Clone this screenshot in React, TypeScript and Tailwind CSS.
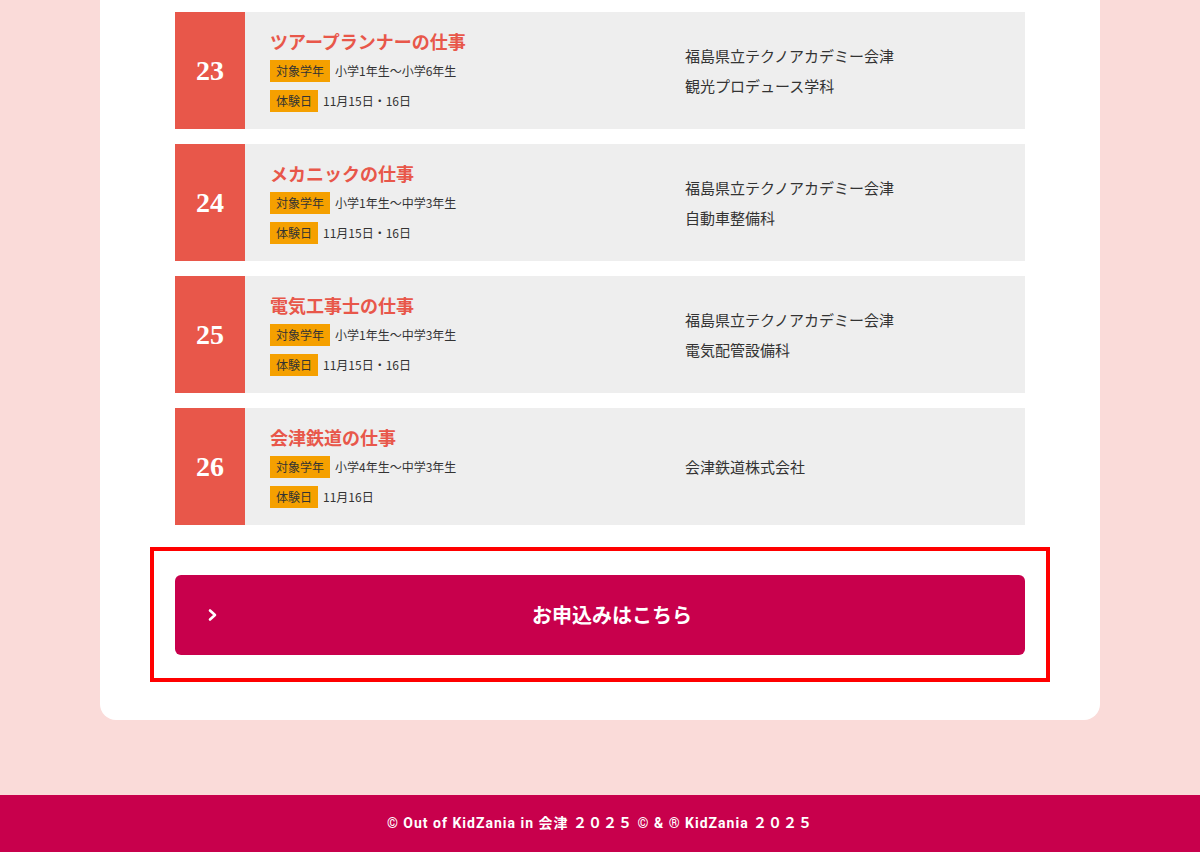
import React from "react";

interface Job {
  no: number;
  title: string;
  grade: string;
  date: string;
  school: string[];
}

const jobs: Job[] = [
  {
    no: 23,
    title: "ツアープランナーの仕事",
    grade: "小学1年生〜小学6年生",
    date: "11月15日・16日",
    school: ["福島県立テクノアカデミー会津", "観光プロデュース学科"],
  },
  {
    no: 24,
    title: "メカニックの仕事",
    grade: "小学1年生〜中学3年生",
    date: "11月15日・16日",
    school: ["福島県立テクノアカデミー会津", "自動車整備科"],
  },
  {
    no: 25,
    title: "電気工事士の仕事",
    grade: "小学1年生〜中学3年生",
    date: "11月15日・16日",
    school: ["福島県立テクノアカデミー会津", "電気配管設備科"],
  },
  {
    no: 26,
    title: "会津鉄道の仕事",
    grade: "小学4年生〜中学3年生",
    date: "11月16日",
    school: ["会津鉄道株式会社"],
  },
];

const Badge = ({ label }: { label: string }) => (
  <span className="inline-flex items-center h-[22px] px-[6px] bg-[#f5a000] text-[#333] text-[12px] leading-none mr-[5px]">
    {label}
  </span>
);

const JobRow: React.FC<{ job: Job }> = ({ job }) => (
  <div className="flex h-[117px] mx-[25px] mb-[15px] bg-[#eeeeee]">
    <div className="w-[70px] shrink-0 bg-[#e8574a] flex items-center justify-center">
      <span className="text-white text-[28px] font-bold font-['Liberation_Serif',serif]">
        {job.no}
      </span>
    </div>
    <div className="w-[440px] shrink-0 pl-[25px] pt-[16px]">
      <div className="text-[18px] leading-[26px] font-bold text-[#e8574a]">
        {job.title}
      </div>
      <div className="flex items-center mt-[6px] text-[12px] text-[#333]">
        <Badge label="対象学年" />
        {job.grade}
      </div>
      <div className="flex items-center mt-[8px] text-[12px] text-[#333]">
        <Badge label="体験日" />
        {job.date}
      </div>
    </div>
    <div className="flex flex-col justify-center text-[15px] leading-[30px] text-[#333]">
      {job.school.map((s) => (
        <div key={s}>{s}</div>
      ))}
    </div>
  </div>
);

export default function App() {
  return (
    <div className="min-h-[852px] bg-[#fadbd9] font-['Noto_Sans_CJK_JP','Noto_Sans',sans-serif] flex flex-col">
      <div className="mx-[100px] bg-white rounded-b-[16px] px-[50px] pt-[12px] pb-[38px]">
        {jobs.map((job) => (
          <JobRow key={job.no} job={job} />
        ))}
        <div className="mt-[22px] border-[4px] border-[#ff0000] px-[21px] pt-[24px] pb-[23px]">
          <a
            href="#"
            className="relative flex items-center justify-center h-[80px] pl-[24px] rounded-[6px] bg-[#c8004c] text-white text-[20px] font-bold"
          >
            <svg
              className="absolute left-[32px] top-1/2 -translate-y-1/2"
              width="12"
              height="14"
              viewBox="0 0 12 14"
              fill="none"
            >
              <path d="M3 2.5 L8 7 L3 11.5" stroke="white" strokeWidth="2.6" strokeLinecap="round" strokeLinejoin="round" />
            </svg>
            お申込みはこちら
          </a>
        </div>
      </div>
      <div className="flex-1" />
      <footer className="h-[57px] bg-[#c8004c] flex items-center justify-center text-white text-[14px] font-bold tracking-[1px] font-['Roboto','Noto_Sans_CJK_JP',sans-serif]">
        © Out of KidZania in 会津 ２０２５ © &amp; ® KidZania ２０２５
      </footer>
    </div>
  );
}
